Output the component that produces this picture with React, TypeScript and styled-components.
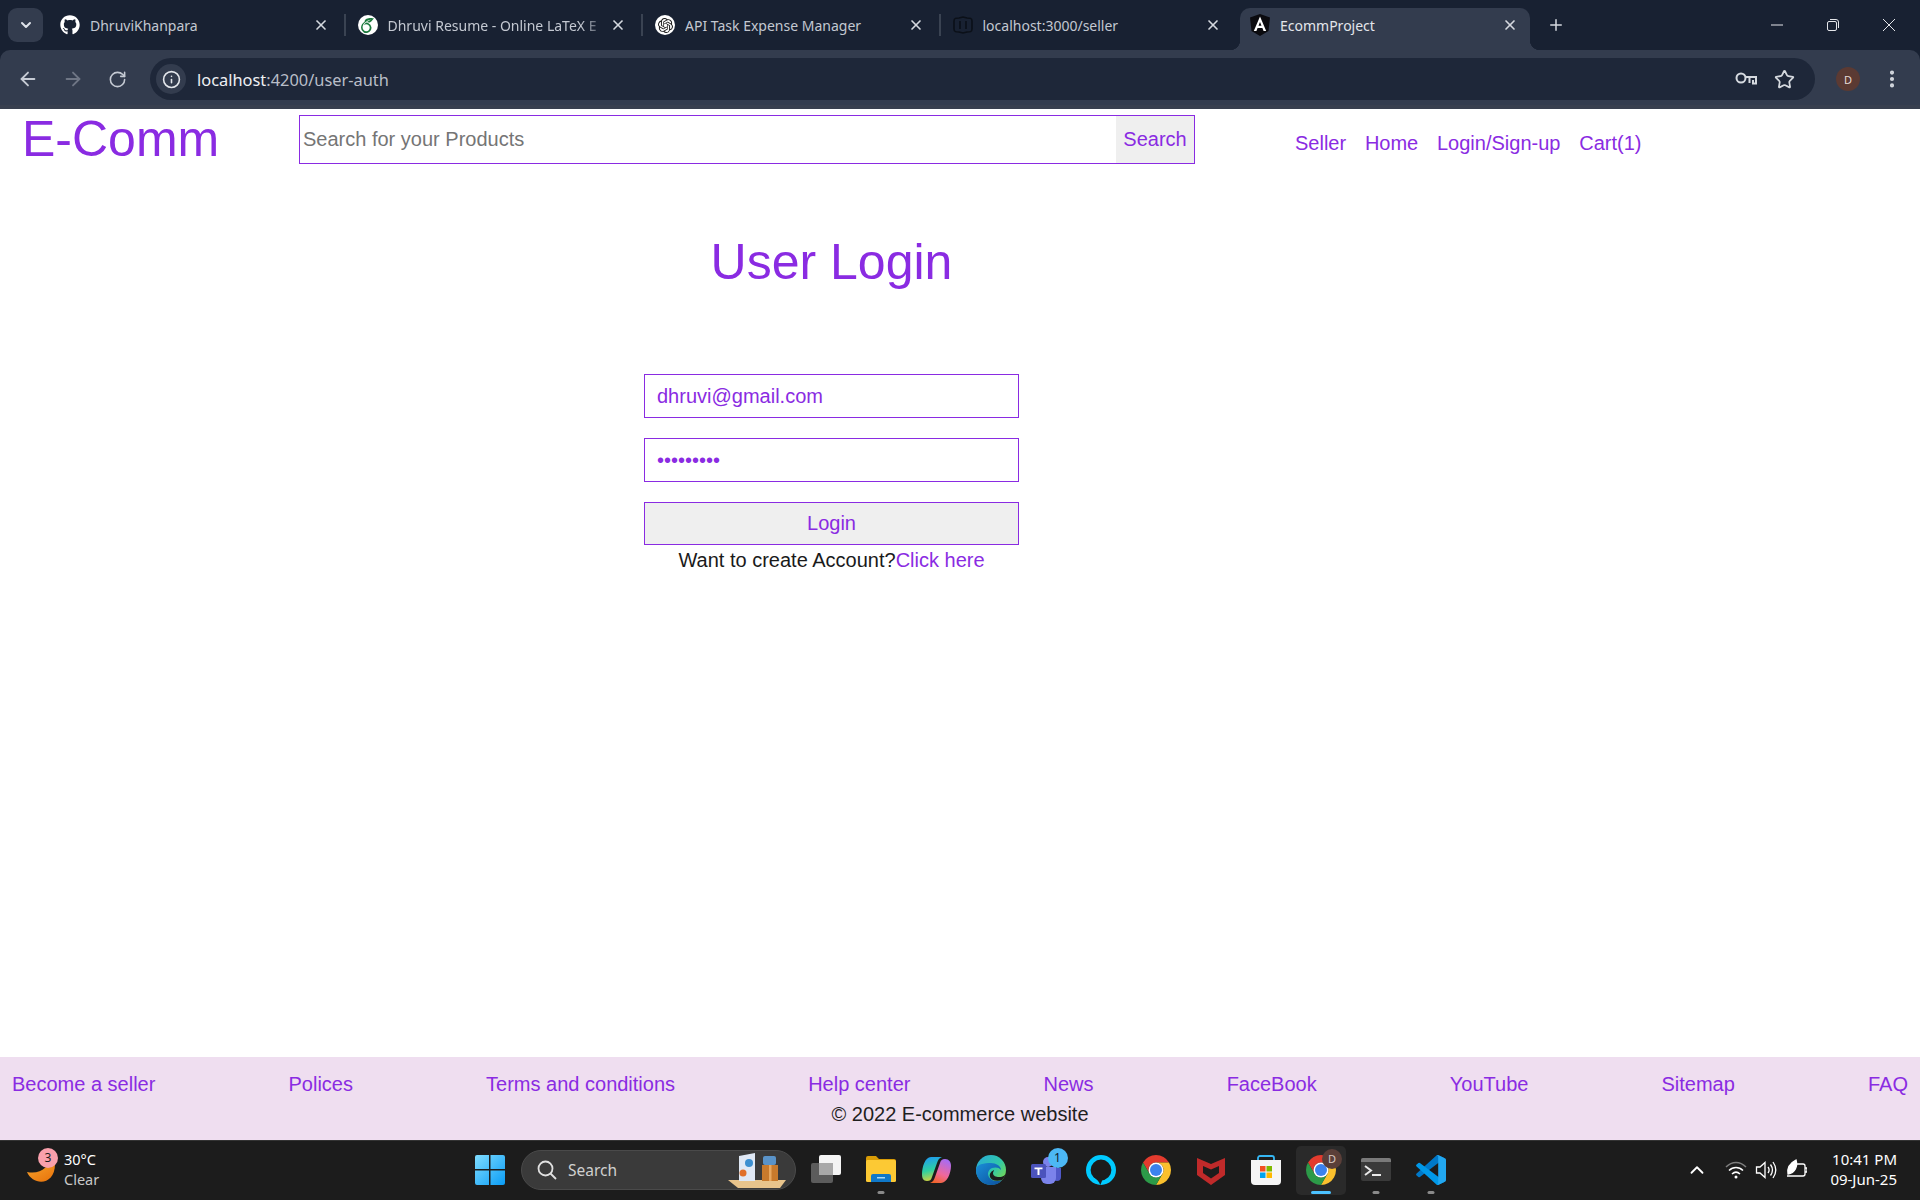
import React from 'react';
import styled, { createGlobalStyle } from 'styled-components';
import { ArrowLeft, ArrowRight, ChevronDown, ChevronUp, EllipsisVertical, Info, Plus, RotateCw, Star, X } from 'lucide-react';
import { FaGithub } from 'react-icons/fa';
import { SiOpenai, SiOverleaf } from 'react-icons/si';

const violet = '#8a2be2';
const UI_FONT = '"Noto Sans", "Open Sans", sans-serif';

const GlobalStyle = createGlobalStyle`
    html, body {
        margin: 0;
        padding: 0;
        background: #ffffff;
    }
    * {
        box-sizing: border-box;
    }
`;

const Screen = styled.div`
    width: 1920px;
    height: 1200px;
    display: flex;
    flex-direction: column;
    overflow: hidden;
    background: #182132;
    font-family: "Liberation Sans", Arial, sans-serif;
`;

/* browser chrome */
const TabStrip = styled.div`
    height: 50px;
    flex: none;
    display: flex;
    align-items: flex-end;
    background: #182132;
    font-family: ${UI_FONT};
`;

const TabSearch = styled.div`
    width: 35px;
    height: 34px;
    margin: 0 7px 8px 8px;
    border-radius: 9px;
    background: #333c4e;
    color: #dfe3ea;
    display: flex;
    align-items: center;
    justify-content: center;
`;

const Tab = styled.div<{ $last?: boolean }>`
    position: relative;
    width: 297.5px;
    height: 50px;
    padding: 0 19px 0 10px;
    display: flex;
    align-items: center;
    color: #c3c8d1;
    font-size: 14px;

    &::after {
        content: '';
        display: ${p => (p.$last ? 'none' : 'block')};
        position: absolute;
        right: 2px;
        top: 14px;
        width: 2px;
        height: 22px;
        background: #3a4352;
    }
`;

const ActiveTab = styled.div`
    position: relative;
    width: 290px;
    height: 42px;
    padding: 0 12px 8px 10px;
    display: flex;
    align-items: center;
    color: #e3e6eb;
    font-size: 14px;
    border-radius: 10px 10px 0 0;
    background: #333c4e;

    &::before,
    &::after {
        content: '';
        position: absolute;
        bottom: 0;
        width: 10px;
        height: 10px;
    }
    &::before {
        left: -10px;
        background: radial-gradient(circle at 0 0, transparent 10px, #333c4e 10.500px);
    }
    &::after {
        right: -10px;
        background: radial-gradient(circle at 100% 0, transparent 10px, #333c4e 10.500px);
    }
`;

const Favicon = styled.span<{ $round?: boolean }>`
    width: 20px;
    height: 20px;
    flex: none;
    border-radius: ${p => (p.$round ? '50%' : '0')};
    background: ${p => (p.$round ? '#ffffff' : 'transparent')};
    display: flex;
    align-items: center;
    justify-content: center;
    margin-right: 10px;
`;

const TabTitle = styled.span<{ $fade?: boolean }>`
    flex: 1;
    overflow: hidden;
    white-space: nowrap;
    mask-image: ${p => (p.$fade ? 'linear-gradient(90deg, #000 90%, rgba(0, 0, 0, 0.25) 100%)' : 'none')};
`;

const TabClose = styled.span`
    flex: none;
    width: 16px;
    margin-left: 8px;
    display: flex;
    justify-content: center;
    color: #d5d9df;
`;

const NewTab = styled.div`
    width: 26px;
    height: 50px;
    margin-left: 13px;
    color: #d5d9df;
    display: flex;
    align-items: center;
    justify-content: center;
`;

const WindowControls = styled.div`
    margin-left: auto;
    height: 50px;
    width: 171px;
    display: flex;
    color: #e4e6ea;
`;

const WindowButton = styled.span`
    width: 56px;
    display: flex;
    align-items: center;
    justify-content: center;
`;

const Toolbar = styled.div`
    height: 59px;
    flex: none;
    display: flex;
    align-items: center;
    padding: 8px 0 5px 5px;
    background: #333c4e;
    border-bottom: 4px solid #383f4e;
    border-radius: 10px 10px 0 0;
    font-family: ${UI_FONT};
`;

const NavIcon = styled.span<{ $dim?: boolean }>`
    width: 45px;
    height: 42px;
    flex: none;
    display: flex;
    align-items: center;
    justify-content: center;
    color: ${p => (p.$dim ? '#6f7685' : '#c6cbd4')};
`;

const AddressBar = styled.div`
    width: 1665px;
    height: 42px;
    margin-left: 10px;
    padding: 0 20px 0 6px;
    border-radius: 21px;
    background: #1e2739;
    display: flex;
    align-items: center;
`;

const SiteInfo = styled.span`
    width: 30px;
    height: 30px;
    flex: none;
    border-radius: 50%;
    background: #333c4e;
    color: #e3e6eb;
    display: flex;
    align-items: center;
    justify-content: center;
    margin-right: 11px;
`;

const UrlHost = styled.span`
    color: #eef0f4;
    font-size: 16.4px;
`;

const UrlPath = styled.span`
    color: #b9bec8;
    font-size: 16.4px;
`;

const AddressActions = styled.div`
    margin-left: auto;
    display: flex;
    align-items: center;
    gap: 17px;
    color: #d5d9df;
`;

const Avatar = styled.span`
    width: 24px;
    height: 24px;
    margin-left: 21px;
    flex: none;
    border-radius: 50%;
    background: #5b3a33;
    color: #e6d9d5;
    font-size: 11px;
    display: flex;
    align-items: center;
    justify-content: center;
`;

const MoreMenu = styled.span`
    margin-left: 21px;
    color: #d5d9df;
    display: flex;
`;

/* the page */
const Page = styled.main`
    flex: 1;
    background: #ffffff;
`;

const Header = styled.header`
    display: flex;
    align-items: flex-start;
    padding-top: 6px;
`;

const Logo = styled.h1`
    width: 299px;
    margin: 0;
    padding-left: 22px;
    color: ${violet};
    font-size: 50px;
    line-height: 48px;
    font-weight: 400;
`;

const SearchBox = styled.form`
    width: 896px;
    height: 49px;
    display: flex;
    border: 1px solid ${violet};
`;

const SearchInput = styled.input`
    flex: 1;
    min-width: 0;
    border: none;
    outline: none;
    padding: 0 3px;
    font-family: inherit;
    font-size: 20px;
    color: ${violet};

    &::placeholder {
        color: #757575;
    }
`;

const SearchButton = styled.button`
    width: 78px;
    border: none;
    padding: 0;
    background: #efefef;
    color: ${violet};
    font-family: inherit;
    font-size: 20px;
`;

const NavLinks = styled.nav`
    margin: 17px 0 0 100px;
    display: flex;
    gap: 18.750px;
    font-size: 20px;
    line-height: 23px;
    color: ${violet};
`;

const AuthSection = styled.section`
    width: 1663px;
    display: flex;
    flex-direction: column;
    align-items: center;
`;

const Title = styled.h2`
    margin: 70px 0 83px;
    color: ${violet};
    font-size: 50px;
    line-height: 57px;
    font-weight: 400;
`;

const Field = styled.input`
    width: 375px;
    height: 44px;
    margin-bottom: 20px;
    padding: 0 12px;
    border: 1px solid ${violet};
    border-radius: 0;
    outline: none;
    background: #ffffff;
    color: ${violet};
    font-family: inherit;
    font-size: 20px;
`;

const LoginButton = styled.button`
    width: 375px;
    height: 43px;
    padding: 0;
    border: 1px solid ${violet};
    background: #efefef;
    color: ${violet};
    font-family: inherit;
    font-size: 20px;
`;

const SwitchText = styled.p`
    margin: 4px 0 0;
    font-size: 20px;
    line-height: 23px;
    color: #1a1a1a;
`;

const Accent = styled.span`
    color: ${violet};
`;

const Footer = styled.footer`
    height: 83px;
    flex: none;
    padding-top: 16px;
    background: #efdef0;
    font-size: 20px;
    line-height: 23px;
`;

const FooterLinks = styled.div`
    display: flex;
    justify-content: space-between;
    padding: 0 12px;
    color: ${violet};
`;

const Copyright = styled.div`
    margin-top: 7px;
    text-align: center;
    color: #1f1f1f;
`;

/* windows taskbar */
const Taskbar = styled.div`
    height: 60px;
    flex: none;
    display: flex;
    align-items: center;
    padding-bottom: 1px;
    border-top: 1px solid #333333;
    background: #1c1c1c;
    color: #ffffff;
    font-family: ${UI_FONT};
`;

const Weather = styled.div`
    width: 462px;
    height: 100%;
    padding-left: 25px;
    display: flex;
    align-items: center;
`;

const WeatherIcon = styled.span`
    position: relative;
    width: 39px;
    height: 40px;
    flex: none;
`;

const WeatherBadge = styled.span`
    position: absolute;
    left: 13px;
    top: -2px;
    width: 20px;
    height: 20px;
    border-radius: 50%;
    background: #f9a0ac;
    color: #1c1c1c;
    font-size: 12px;
    line-height: 20px;
    text-align: center;
`;

const WeatherText = styled.div`
    padding-bottom: 2px;
    font-size: 14.500px;
    line-height: 20px;
`;

const WeatherSub = styled.div`
    color: #c8c8c8;
`;

const TaskCell = styled.span<{ $active?: boolean }>`
    position: relative;
    width: ${p => (p.$active ? '50px' : '55px')};
    margin: ${p => (p.$active ? '0 2.500px' : '0')};
    height: 49px;
    flex: none;
    border-radius: 5px;
    display: flex;
    align-items: center;
    justify-content: center;
    background: ${p => (p.$active ? '#2a2a2a' : 'transparent')};
`;

const RunDot = styled.span<{ $active?: boolean }>`
    position: absolute;
    left: 50%;
    bottom: 1px;
    transform: translateX(-50%);
    width: ${p => (p.$active ? '20px' : '7px')};
    height: 3px;
    border-radius: 2px;
    background: ${p => (p.$active ? '#4cc2ff' : '#8a8a8a')};
`;

const CountBadge = styled.span`
    position: absolute;
    left: 29px;
    top: 2px;
    width: 20px;
    height: 20px;
    border-radius: 50%;
    background: #4cb8f5;
    color: #10202c;
    font-size: 12px;
    line-height: 20px;
    text-align: center;
`;

const ProfileBadge = styled.span`
    position: absolute;
    left: 26px;
    top: 3px;
    width: 20px;
    height: 20px;
    border-radius: 50%;
    background: #5b3f39;
    color: #d8c9c4;
    font-size: 11px;
    line-height: 20px;
    text-align: center;
`;

const TaskSearch = styled.div`
    position: relative;
    width: 275px;
    height: 40px;
    margin: 0 2.500px 0 4px;
    padding-left: 15px;
    border-radius: 20px;
    border: 1px solid #4a4a4a;
    background: #3a3a3a;
    color: #d0d0d0;
    font-size: 15.500px;
    display: flex;
    align-items: center;
    gap: 11px;
`;

const SearchArt = styled.svg`
    position: absolute;
    right: 5px;
    top: 1px;
`;

const Tray = styled.div`
    margin-left: auto;
    height: 100%;
    display: flex;
    align-items: center;
    padding-right: 23px;
`;

const TrayIcon = styled.span<{ $gap: number }>`
    width: 24px;
    margin-right: ${p => p.$gap}px;
    display: flex;
    justify-content: center;
`;

const Clock = styled.div`
    margin-left: 22px;
    padding-bottom: 3px;
    text-align: right;
    font-size: 15px;
    line-height: 20px;
`;

/* drawn marks */
const AngularMark = () => (
    <svg width="20" height="22" viewBox="2 1 20 22">
        <path d="M12 1 22 4.500 20.500 18 12 23 3.500 18 2 4.500z" fill="#0b0b0f" />
        <path d="M12 3.500 5.800 18h2.600l1.200-3h4.800l1.200 3h2.600zM10.500 12.800 12 9l1.500 3.800z" fill="#ffffff" />
    </svg>
);

const DarkMark = () => (
    <svg width="20" height="20" viewBox="0 0 20 20" fill="none" stroke="#0b1018" strokeWidth="1.600">
        <path d="M1 6c0-3 2-3 5-3l4-1 4 1c3 0 5 0 5 3v8c0 3-2 3-5 3l-4 1-4-1c-3 0-5 0-5-3z" />
        <path d="M7 6v8M13 6v8" />
    </svg>
);

const KeyMark = () => (
    <svg width="22" height="16" viewBox="0 0 22 16" fill="none" stroke="currentColor" strokeWidth="2">
        <circle cx="6" cy="7" r="4.500" />
        <path d="M10.500 6H21v6.500h-3V9M14.500 6v6" />
    </svg>
);

const WindowsLogo = () => (
    <svg width="30" height="30" viewBox="0 0 30 30">
        <defs>
            <linearGradient id="win" x1="0" y1="0" x2="1" y2="1">
                <stop offset="0" stopColor="#7fdcff" />
                <stop offset="1" stopColor="#0a9cf5" />
            </linearGradient>
        </defs>
        <path d="M0 2a2 2 0 0 1 2-2h12v14H0zM15.500 0H28a2 2 0 0 1 2 2v12H15.500zM0 15.500h14V30H2a2 2 0 0 1-2-2zM15.500 15.500H30V28a2 2 0 0 1-2 2H15.500z" fill="url(#win)" />
    </svg>
);

const TaskViewIcon = () => (
    <svg width="30" height="30" viewBox="0 0 30 30">
        <rect x="0" y="8" width="22" height="20" rx="2" fill="#5c5c5c" />
        <rect x="8" y="0" width="22" height="20" rx="2" fill="#f4f4f4" />
        <rect x="8" y="8" width="14" height="12" fill="#a9a9a9" />
    </svg>
);

const FolderIcon = () => (
    <svg width="30" height="30" viewBox="0 0 30 30">
        <path d="M0 3a2 2 0 0 1 2-2h8l3 3h15a2 2 0 0 1 2 2v2H0z" fill="#d99c06" />
        <rect x="0" y="5" width="30" height="22" rx="1.500" fill="#fcc934" />
        <path d="M5 21a2 2 0 0 1 2-2h16a2 2 0 0 1 2 2v6H5z" fill="#0f78c9" />
        <rect x="11" y="22" width="8" height="1.500" fill="#a6d9f7" />
    </svg>
);

const CopilotIcon = () => (
    <svg width="30" height="30" viewBox="0 0 30 30">
        <defs>
            <linearGradient id="copA" x1="0.300" y1="0" x2="0.500" y2="1">
                <stop offset="0" stopColor="#1f9cf0" />
                <stop offset="0.550" stopColor="#2fd0a0" />
                <stop offset="1" stopColor="#d8d23a" />
            </linearGradient>
            <linearGradient id="copB" x1="0.700" y1="0" x2="0.300" y2="1">
                <stop offset="0" stopColor="#a66cf5" />
                <stop offset="0.600" stopColor="#f0689a" />
                <stop offset="1" stopColor="#f0642c" />
            </linearGradient>
        </defs>
        <path d="M10 2h11c-3 1-4 3-5 6l-5 14c-1 3-2 4-5 4-4 0-5-3-5-7 0-7 3-17 9-17z" fill="url(#copA)" />
        <path d="M20 28H9c3-1 4-3 5-6l5-14c1-3 2-4 5-4 4 0 6 3 6 7 0 7-4 17-10 17z" fill="url(#copB)" />
    </svg>
);

const EdgeIcon = () => (
    <svg width="30" height="30" viewBox="0 0 30 30">
        <defs>
            <linearGradient id="edgeTop" x1="0" y1="0" x2="1" y2="0.800">
                <stop offset="0" stopColor="#28a8dc" />
                <stop offset="0.600" stopColor="#30c8a8" />
                <stop offset="1" stopColor="#7ed84a" />
            </linearGradient>
            <linearGradient id="edgeLow" x1="0" y1="0" x2="1" y2="1">
                <stop offset="0" stopColor="#1a8fd8" />
                <stop offset="1" stopColor="#0c4f9c" />
            </linearGradient>
        </defs>
        <circle cx="15" cy="15" r="15" fill="url(#edgeTop)" />
        <path d="M0 15C0 24 7 30 15 30c5 0 9-2 11-5-5 2-11 1-13-3-2-3-1-7 3-9 3-1 7-1 9 2 0-4-5-7-10-7C8 8 0 9 0 15z" fill="url(#edgeLow)" />
        <path d="M30 17c0 3-3 5-7 5-3 0-6-1-6-4 0-1 1-2 1-3-2 1-5 3-4 7 1 3 6 5 12 3 2-2 4-5 4-8z" fill="#1c1c1c" />
    </svg>
);

const TeamsIcon = () => (
    <svg width="30" height="30" viewBox="0 0 30 30">
        <circle cx="17" cy="7" r="5" fill="#7b83eb" />
        <circle cx="26" cy="9" r="3.500" fill="#5059c9" />
        <path d="M22 13h8v9a4 4 0 0 1-8 0z" fill="#5059c9" />
        <path d="M10 12h15v11a6 6 0 0 1-6 6h-3a6 6 0 0 1-6-6z" fill="#7b83eb" />
        <rect x="0" y="9" width="15" height="14" rx="1.500" fill="#4b53bc" />
        <path d="M3.500 12.500h8v1.800h-3V20H6.500v-5.700h-3z" fill="#ffffff" />
    </svg>
);

const AlexaIcon = () => (
    <svg width="30" height="30" viewBox="0 0 30 30">
        <circle cx="15" cy="15" r="12.700" fill="none" stroke="#00caff" strokeWidth="4.600" />
        <path d="M7 21.500 17 23.500 14.300 30C13 26.500 11 24 7 21.500z" fill="#1c1c1c" />
    </svg>
);

const ChromeIcon = () => (
    <svg width="30" height="30" viewBox="4 4 40 40">
        <path d="M24 14H41.320A20 20 0 0 0 6.680 14L15.340 29A10 10 0 0 1 24 14z" fill="#e33b2e" />
        <path d="M24 44A20 20 0 0 0 41.320 14H24A10 10 0 0 1 32.660 29z" fill="#fbc02d" />
        <path d="M6.680 14A20 20 0 0 0 24 44L32.660 29A10 10 0 0 1 15.340 29z" fill="#2c9a48" />
        <circle cx="24" cy="24" r="10" fill="#ffffff" />
        <circle cx="24" cy="24" r="8" fill="#3b82ee" />
    </svg>
);

const McAfeeIcon = () => (
    <svg width="28" height="30" viewBox="0 0 28 30">
        <path d="M0 3l14 6 14-6v17L14 30 0 20z" fill="#c02a2a" />
        <path d="M6 11l8 3.500 8-3.500v7l-8 5.500-8-5.500z" fill="#1c1c1c" />
    </svg>
);

const StoreIcon = () => (
    <svg width="30" height="30" viewBox="0 0 30 30">
        <path d="M7 6V3a2 2 0 0 1 2-2h12a2 2 0 0 1 2 2v3" fill="none" stroke="#35b6f2" strokeWidth="1.800" />
        <path d="M0 5h30v21a4 4 0 0 1-4 4H4a4 4 0 0 1-4-4z" fill="#f5f5f5" />
        <rect x="9" y="11" width="5.500" height="5.500" fill="#f25022" />
        <rect x="15.500" y="11" width="5.500" height="5.500" fill="#7fba00" />
        <rect x="9" y="17.500" width="5.500" height="5.500" fill="#00a4ef" />
        <rect x="15.500" y="17.500" width="5.500" height="5.500" fill="#ffb900" />
    </svg>
);

const TerminalIcon = () => (
    <svg width="30" height="24" viewBox="0 0 30 24">
        <rect width="30" height="23" rx="2" fill="#3a3a3a" />
        <path d="M0 2a2 2 0 0 1 2-2h26a2 2 0 0 1 2 2v2H0z" fill="#7a7a7a" />
        <path d="M4 8l6 4.500-6 4.500" fill="none" stroke="#e8e8e8" strokeWidth="2" />
        <rect x="11" y="16" width="9" height="2" fill="#e8e8e8" />
    </svg>
);

const VsCodeIcon = () => (
    <svg width="30" height="30" viewBox="0 0 100 100">
        <path d="M96 11 75 1a6 6 0 0 0-7 1L2 62a4 4 0 0 0 0 6l6 5a4 4 0 0 0 5 0L96 10z" fill="#0078c8" />
        <path d="M96 89 75 99a6 6 0 0 1-7-1L2 38a4 4 0 0 1 0-6l6-5a4 4 0 0 1 5 0z" fill="#0098e8" />
        <path d="M71 99a6 6 0 0 0 4 0l21-10a6 6 0 0 0 4-6V17a6 6 0 0 0-4-6L75 1a6 6 0 0 0-7 1c2-1 6 0 6 4v88c0 4-3 5-3 5z" fill="#22a7f0" />
    </svg>
);

const MoonIcon = () => (
    <svg width="32" height="34" viewBox="0 0 32 34">
        <defs>
            <linearGradient id="moon" x1="0" y1="0" x2="0.600" y2="1">
                <stop offset="0" stopColor="#fbb034" />
                <stop offset="1" stopColor="#ea7a10" />
            </linearGradient>
        </defs>
        <path d="M2 22C8 36 30 36 30 14 30 10 28 7 25 5 26 16 16 25 2 22z" fill="url(#moon)" />
    </svg>
);

const WifiMark = () => (
    <svg width="22" height="20" viewBox="0 0 22 20" fill="none" stroke="#ffffff" strokeWidth="1.500">
        <path d="M1 7c6-6 14-6 20 0" stroke="#7d7d7d" />
        <path d="M4 10.500c4-4 10-4 14 0M7 14c2.500-2.500 5.500-2.500 8 0" />
        <circle cx="11" cy="17" r="1.500" fill="#ffffff" stroke="none" />
    </svg>
);

const VolumeMark = () => (
    <svg width="22" height="22" viewBox="0 0 22 22" fill="none" stroke="#ffffff" strokeWidth="1.300">
        <path d="M1.500 8v6h3.500l5 4.500v-15L5 8z" />
        <path d="M13 8c1.500 2 1.500 4 0 6M15.500 5.500c2.500 3.500 2.500 7.500 0 11M18 3c3.500 5 3.500 11 0 16" />
    </svg>
);

const BatteryLeaf = () => (
    <svg width="22" height="22" viewBox="0 0 22 22" fill="none" stroke="#ffffff" strokeWidth="1.300">
        <path d="M12 5h6a2 2 0 0 1 2 2v8a2 2 0 0 1-2 2H2" />
        <path d="M20 9h2v4h-2" />
        <path d="M3 15c-1-6 2-11 8-14 2 6-1 13-8 14z" fill="#ffffff" />
    </svg>
);

const tabs = [
    { title: 'DhruviKhanpara', icon: <FaGithub size={20} color="#ffffff" /> },
    { title: 'Dhruvi Resume - Online LaTeX E', icon: <SiOverleaf size={15} color="#1d7a3e" />, round: true, fade: true },
    { title: 'API Task Expense Manager', icon: <SiOpenai size={15} color="#1a1a1a" />, round: true },
    { title: 'localhost:3000/seller', icon: <DarkMark />, last: true },
];

const footerLinks = ['Become a seller', 'Polices', 'Terms and conditions', 'Help center', 'News', 'FaceBook', 'YouTube', 'Sitemap', 'FAQ'];

const App: React.FC = () => {
    return (
        <Screen>
            <GlobalStyle />
            <TabStrip>
                <TabSearch><ChevronDown size={16} strokeWidth={3} /></TabSearch>
                {tabs.map(tab => (
                    <Tab key={tab.title} $last={tab.last}>
                        <Favicon $round={tab.round}>{tab.icon}</Favicon>
                        <TabTitle $fade={tab.fade}>{tab.title}</TabTitle>
                        <TabClose><X size={16} strokeWidth={2.5} /></TabClose>
                    </Tab>
                ))}
                <ActiveTab>
                    <Favicon><AngularMark /></Favicon>
                    <TabTitle>EcommProject</TabTitle>
                    <TabClose><X size={16} strokeWidth={2.5} /></TabClose>
                </ActiveTab>
                <NewTab><Plus size={18} strokeWidth={2} /></NewTab>
                <WindowControls>
                    <WindowButton>
                        <svg width="14" height="14" viewBox="0 0 14 14" stroke="currentColor"><path d="M1 7h12" /></svg>
                    </WindowButton>
                    <WindowButton>
                        <svg width="14" height="14" viewBox="0 0 14 14" fill="none" stroke="currentColor"><rect x="1.500" y="3.500" width="9" height="9" rx="1.500" /><path d="M4 1.500h6a2.500 2.500 0 0 1 2.500 2.500v6" /></svg>
                    </WindowButton>
                    <WindowButton>
                        <svg width="14" height="14" viewBox="0 0 14 14" stroke="currentColor"><path d="M1 1l12 12M13 1L1 13" /></svg>
                    </WindowButton>
                </WindowControls>
            </TabStrip>

            <Toolbar>
                <NavIcon><ArrowLeft size={22} /></NavIcon>
                <NavIcon $dim><ArrowRight size={22} /></NavIcon>
                <NavIcon><RotateCw size={19} /></NavIcon>
                <AddressBar>
                    <SiteInfo><Info size={19} /></SiteInfo>
                    <UrlHost>localhost</UrlHost>
                    <UrlPath>:4200/user-auth</UrlPath>
                    <AddressActions>
                        <KeyMark />
                        <Star size={21} />
                    </AddressActions>
                </AddressBar>
                <Avatar>D</Avatar>
                <MoreMenu><EllipsisVertical size={22} strokeWidth={2.5} /></MoreMenu>
            </Toolbar>

            <Page>
                <Header>
                    <Logo>E-Comm</Logo>
                    <SearchBox>
                        <SearchInput placeholder="Search for your Products" readOnly />
                        <SearchButton type="button">Search</SearchButton>
                    </SearchBox>
                    <NavLinks>
                        <span>Seller</span>
                        <span>Home</span>
                        <span>Login/Sign-up</span>
                        <span>Cart(1)</span>
                    </NavLinks>
                </Header>
                <AuthSection>
                    <Title>User Login</Title>
                    <Field type="text" value="dhruvi@gmail.com" readOnly />
                    <Field type="password" value="123456789" readOnly />
                    <LoginButton type="button">Login</LoginButton>
                    <SwitchText>Want to create Account?<Accent>Click here</Accent></SwitchText>
                </AuthSection>
            </Page>

            <Footer>
                <FooterLinks>
                    {footerLinks.map(link => <span key={link}>{link}</span>)}
                </FooterLinks>
                <Copyright>© 2022 E-commerce website</Copyright>
            </Footer>

            <Taskbar>
                <Weather>
                    <WeatherIcon>
                        <MoonIcon />
                        <WeatherBadge>3</WeatherBadge>
                    </WeatherIcon>
                    <WeatherText>
                        30°C
                        <WeatherSub>Clear</WeatherSub>
                    </WeatherText>
                </Weather>
                <TaskCell><WindowsLogo /></TaskCell>
                <TaskSearch>
                    <svg width="20" height="20" viewBox="0 0 20 20" fill="none" stroke="#e0e0e0" strokeWidth="1.800"><circle cx="8.500" cy="8.500" r="7" /><path d="M13.500 13.500 19 19" /></svg>
                    Search
                    <SearchArt width="64" height="38" viewBox="0 0 64 38">
                        <path d="M2 28h58l-6 8H12z" fill="#e8c48c" />
                        <path d="M13 4l16-3v28H13z" fill="#dfe8f5" />
                        <circle cx="23" cy="11" r="4" fill="#3c8fd0" />
                        <circle cx="17" cy="21" r="3.500" fill="#e0702a" />
                        <rect x="36" y="13" width="16" height="16" fill="#c87a2c" />
                        <rect x="43" y="13" width="2.500" height="16" fill="#e8a860" />
                        <rect x="37" y="4" width="13" height="9" rx="2" fill="#5a93c8" />
                    </SearchArt>
                </TaskSearch>
                <TaskCell><TaskViewIcon /></TaskCell>
                <TaskCell><FolderIcon /><RunDot /></TaskCell>
                <TaskCell><CopilotIcon /></TaskCell>
                <TaskCell><EdgeIcon /></TaskCell>
                <TaskCell><TeamsIcon /><CountBadge>1</CountBadge></TaskCell>
                <TaskCell><AlexaIcon /></TaskCell>
                <TaskCell><ChromeIcon /></TaskCell>
                <TaskCell><McAfeeIcon /></TaskCell>
                <TaskCell><StoreIcon /></TaskCell>
                <TaskCell $active><ChromeIcon /><ProfileBadge>D</ProfileBadge><RunDot $active /></TaskCell>
                <TaskCell><TerminalIcon /><RunDot /></TaskCell>
                <TaskCell><VsCodeIcon /><RunDot /></TaskCell>
                <Tray>
                    <TrayIcon $gap={15}><ChevronUp size={22} /></TrayIcon>
                    <TrayIcon $gap={6}><WifiMark /></TrayIcon>
                    <TrayIcon $gap={6}><VolumeMark /></TrayIcon>
                    <TrayIcon $gap={0}><BatteryLeaf /></TrayIcon>
                    <Clock>
                        10:41 PM
                        <div>09-Jun-25</div>
                    </Clock>
                </Tray>
            </Taskbar>
        </Screen>
    );
};

export default App;
